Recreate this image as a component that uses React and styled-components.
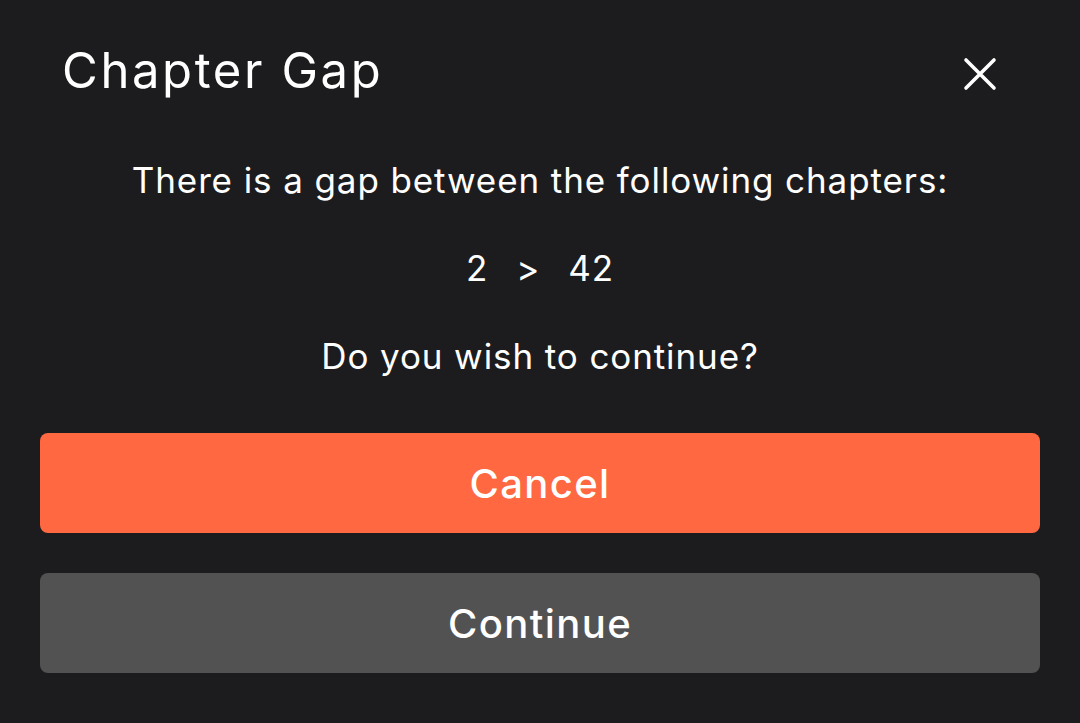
import React from 'react';
import styled, { createGlobalStyle } from 'styled-components';

const GlobalStyles = createGlobalStyle`
    html, body {
        margin: 0;
        padding: 0;
        background: #1c1c1e;
    }
    body {
        font-family: Inter, 'Noto Sans', sans-serif;
        color: #ffffff;
    }
`;

const Dialog = styled.div`
    width: 1080px;
    height: 723px;
    box-sizing: border-box;
    padding: 0 40px;
    background: #1c1c1e;
    display: flex;
    flex-direction: column;
`;

const Header = styled.div`
    height: 140px;
    display: flex;
    align-items: center;
    justify-content: space-between;
    padding: 0 40px 0 22px;
`;

const Title = styled.h1`
    margin: 0;
    font-size: 49px;
    font-weight: 400;
    letter-spacing: 2.6px;
`;

const CloseButton = styled.button`
    width: 40px;
    height: 40px;
    margin-top: 8px;
    padding: 0;
    border: none;
    background: none;
    display: flex;
    align-items: center;
    justify-content: center;
    cursor: pointer;
`;

const Body = styled.div`
    margin-top: 15px;
    display: flex;
    flex-direction: column;
    align-items: center;
    gap: 38px;
`;

const Line = styled.p`
    margin: 0;
    height: 50px;
    line-height: 50px;
    font-size: 35px;
    letter-spacing: 0.9px;
    text-align: center;
    display: flex;
    align-items: center;
    gap: ${p => p.$gap || 0}px;
`;

const Actions = styled.div`
    margin-top: 52px;
    display: flex;
    flex-direction: column;
    gap: 40px;
`;

const ActionButton = styled.button`
    height: 100px;
    width: 100%;
    border: none;
    border-radius: 8px;
    background: ${p => (p.$primary ? '#ff6841' : '#525252')};
    color: #ffffff;
    font-family: Inter, 'Noto Sans', sans-serif;
    font-size: 40px;
    font-weight: 500;
    letter-spacing: 1.4px;
    cursor: pointer;
`;

const CloseIcon = () => (
    <svg width="34" height="34" viewBox="0 0 34 34">
        <path d="M3 3 L31 31 M31 3 L3 31" stroke="#ffffff" strokeWidth="3.6" strokeLinecap="round" />
    </svg>
);

export default function App() {
    return (
        <Dialog>
            <GlobalStyles />
            <Header>
                <Title>Chapter Gap</Title>
                <CloseButton aria-label="Close">
                    <CloseIcon />
                </CloseButton>
            </Header>
            <Body>
                <Line>There is a gap between the following chapters:</Line>
                <Line $gap={28}>
                    <span>2</span>
                    <span>&gt;</span>
                    <span>42</span>
                </Line>
                <Line>Do you wish to continue?</Line>
            </Body>
            <Actions>
                <ActionButton $primary>Cancel</ActionButton>
                <ActionButton>Continue</ActionButton>
            </Actions>
        </Dialog>
    );
}
